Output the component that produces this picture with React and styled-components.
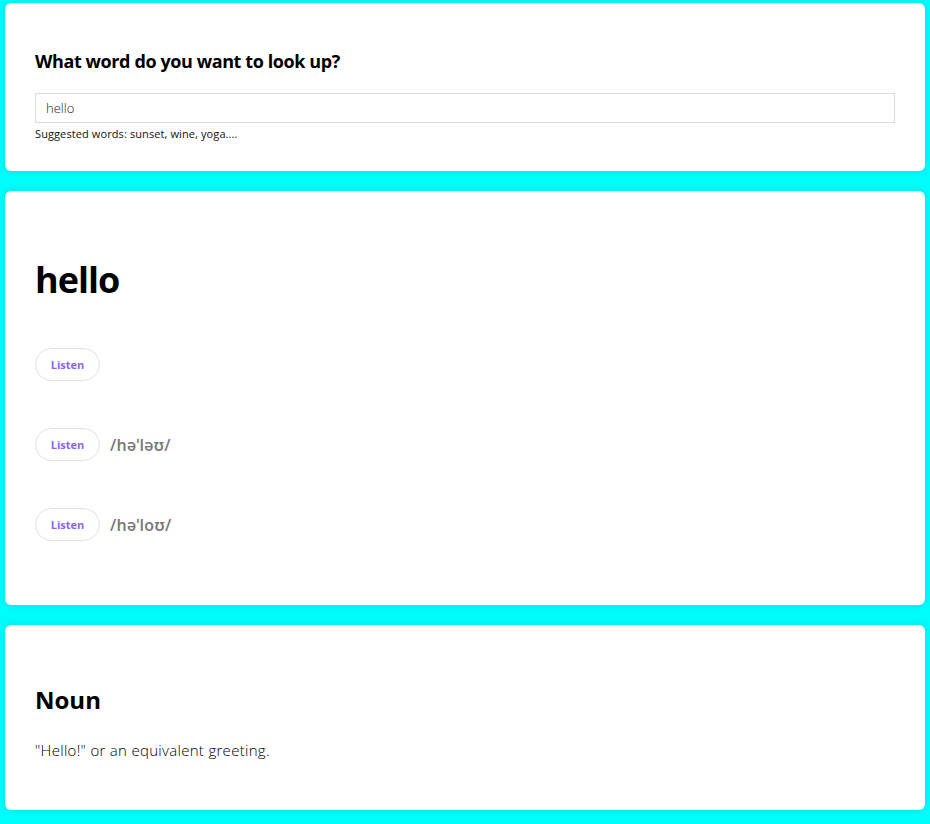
import React from 'react'
import styled, { createGlobalStyle } from 'styled-components'

const GlobalStyle = createGlobalStyle`
    body {
        margin: 0;
        background: #00fcfc;
        font-family: "Open Sans", "Noto Sans", sans-serif;
        color: #000;
    }
`

const pronunciations = [
    { text: '' },
    { text: '/həˈləʊ/' },
    { text: '/həˈloʊ/' },
]

function App() {
    return (
        <>
            <GlobalStyle />
            <Page>
                <Card>
                    <Question>What word do you want to look up?</Question>
                    <SearchInput type="search" defaultValue="hello" />
                    <Hint>Suggested words: sunset, wine, yoga....</Hint>
                </Card>

                <Card pad="64px">
                    <Word>hello</Word>
                    <Phonetics>
                        {pronunciations.map((p, i) => (
                            <PhoneticRow key={i}>
                                <ListenButton>Listen</ListenButton>
                                {p.text && <Phonetic>{p.text}</Phonetic>}
                            </PhoneticRow>
                        ))}
                    </Phonetics>
                </Card>

                <Card pad="50px">
                    <PartOfSpeech>Noun</PartOfSpeech>
                    <Definition>"Hello!" or an equivalent greeting.</Definition>
                </Card>
            </Page>
        </>
    )
}

export default App

const Page = styled.main`
    display: flex;
    flex-direction: column;
    gap: 20px;
    padding: 3px 5px 14px;
`

const Card = styled.section`
    background: #fff;
    border-radius: 6px;
    padding: 30px 30px ${p => p.pad || '30px'};
    box-shadow: 0 0 6px rgba(0, 40, 40, 0.12);
`

const Question = styled.h1`
    font-size: 18px;
    font-weight: 700;
    line-height: 22px;
    margin: 17px 0 21px;
    letter-spacing: -0.4px;
`

const SearchInput = styled.input`
    display: block;
    box-sizing: border-box;
    width: 100%;
    height: 30px;
    border: 1px solid #dcdcdc;
    border-radius: 0;
    padding: 0 10px;
    font-family: inherit;
    font-size: 13px;
    font-weight: 300;
    color: #222;
    outline: none;
    -webkit-appearance: none;
`

const Hint = styled.div`
    font-size: 11px;
    line-height: 14px;
    margin-top: 4px;
    color: #111;
    letter-spacing: 0.1px;
`

const Word = styled.h2`
    font-size: 36px;
    font-weight: 700;
    line-height: 46px;
    margin: 36px 0 0;
    letter-spacing: -1px;
`

const Phonetics = styled.div`
    display: flex;
    flex-direction: column;
    gap: 47px;
    margin-top: 45px;
`

const PhoneticRow = styled.div`
    display: flex;
    align-items: center;
    gap: 10px;
`

const ListenButton = styled.button`
    box-sizing: border-box;
    width: 65px;
    height: 33px;
    border: 1px solid #e0e0e0;
    border-radius: 17px;
    background: #fff;
    color: #8b64f2;
    font-family: inherit;
    font-size: 11px;
    font-weight: 700;
    padding: 0;
    cursor: pointer;
`

const Phonetic = styled.span`
    font-size: 16px;
    font-weight: 600;
    color: #777;
    letter-spacing: 0.3px;
`

const PartOfSpeech = styled.h3`
    font-size: 24px;
    font-weight: 700;
    line-height: 30px;
    margin: 30px 0 0;
`

const Definition = styled.p`
    font-size: 15px;
    font-weight: 300;
    line-height: 20px;
    margin: 25px 0 0;
    letter-spacing: 0.3px;
`
